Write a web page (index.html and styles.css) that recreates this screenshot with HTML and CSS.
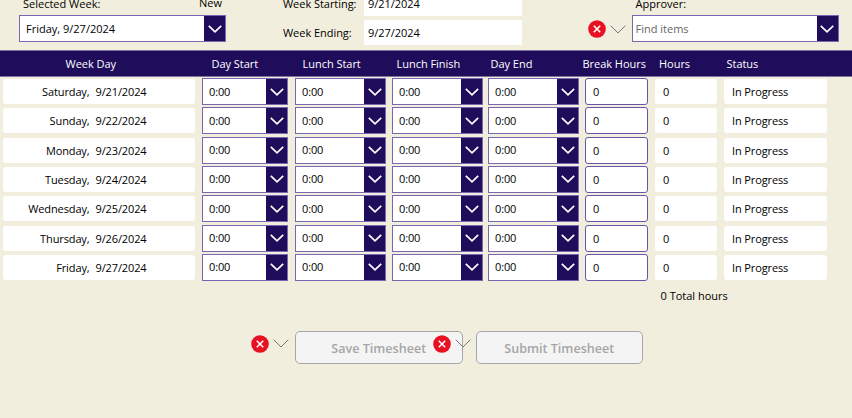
FILE: index.html
```
<!DOCTYPE html>
<html lang="en">
<head>
<meta charset="utf-8">
<title>Timesheet</title>
<link rel="stylesheet" href="styles.css">
</head>
<body>
<svg class="defs" width="0" height="0">
  <symbol id="chev" viewBox="0 0 14 8"><path d="M.8 .9 7 6.8 13.2 .9" fill="none" stroke="currentColor" stroke-width="1.7"/></symbol>
  <symbol id="thin" viewBox="0 0 16 9"><path d="M.7 .7 8 8 15.3 .7" fill="none" stroke="currentColor" stroke-width="1"/></symbol>
  <symbol id="error" viewBox="0 0 18 18"><circle cx="9" cy="9" r="8.8" fill="#e81123"/><path d="M5.8 5.8l6.4 6.4M12.2 5.8l-6.4 6.4" stroke="#fff" stroke-width="1.6"/></symbol>
</svg>
<header class="top">
  <section class="week">
    <div class="caption"><span>Selected Week:</span><span class="new">New</span></div>
    <div class="select"><span>Friday, 9/27/2024</span><i><svg><use href="#chev"/></svg></i></div>
  </section>
  <section class="dates">
    <label>Week Starting:</label><div class="date">9/21/2024</div>
    <label>Week Ending:</label><div class="date">9/27/2024</div>
  </section>
  <div class="alert"><svg class="err"><use href="#error"/></svg><svg class="more"><use href="#thin"/></svg></div>
  <section class="approver">
    <div class="caption"><span>Approver:</span></div>
    <div class="select"><span class="hint">Find items</span><i><svg><use href="#chev"/></svg></i></div>
  </section>
</header>
<div class="thead"><span>Week Day</span><span>Day Start</span><span>Lunch Start</span><span>Lunch Finish</span><span>Day End</span><span>Break Hours</span><span>Hours</span><span>Status</span></div>
<main class="rows" id="rows"></main>
<div class="total">0 Total hours</div>
<footer class="actions">
  <div class="alert"><svg class="err"><use href="#error"/></svg><svg class="more"><use href="#thin"/></svg></div>
  <div class="btn">Save Timesheet
    <div class="alert over"><svg class="err"><use href="#error"/></svg><svg class="more"><use href="#thin"/></svg></div>
  </div>
  <div class="btn">Submit Timesheet</div>
</footer>
<script src="rows.js"></script>
</body>
</html>
```
FILE: styles.css
```
* { box-sizing: border-box; }
body { margin: 0; height: 418px; overflow: hidden; background: #f2eede; color: #000; font: 11px/16px "Open Sans", sans-serif; }
.defs { display: none; }
svg { display: block; }

.top { display: flex; height: 50px; overflow: hidden; }
.week { width: 207px; margin-left: 19px; }
.caption { display: flex; justify-content: space-between; height: 19px; margin-top: -4px; padding: 0 4px; }
.caption .new { margin-top: -1px; }
.select { display: flex; justify-content: space-between; align-items: center; height: 27px; background: #fff; border: 1px solid #7967b2; }
.select > span { padding-left: 6px; }
.select .hint { padding-left: 3px; color: #666; }
.select i { display: flex; align-items: center; justify-content: center; flex: none; width: 21px; height: 100%; background: #1f0c5a; color: #fff; }
.select i svg { width: 14px; height: 8px; }
.dates { display: grid; grid-template-columns: 81px 158px; grid-template-rows: 25px 25px; row-gap: 4px; margin: -9px 0 0 57px; height: 54px; line-height: 25px; letter-spacing: -.04px; }
.dates .date { background: #fff; padding-left: 4px; }
.alert { display: flex; align-items: center; gap: 4px; height: 18px; color: #777; }
.err { width: 18px; height: 18px; }
.more { width: 16px; height: 9px; }
.top .alert { margin: 20px 0 0 66px; }
.approver { width: 207px; margin-left: 5.5px; }

.thead { display: flex; height: 27px; line-height: 26px; background: #1f0c5a; color: #fff; font-weight: 500; border: solid #7d739c; border-width: 1px 0; letter-spacing: -.03px; }
.thead span { flex: none; width: 91px; }
.thead span:nth-child(1) { width: 146px; margin-left: 65.5px; }
.thead span:nth-child(3), .thead span:nth-child(4) { width: 94px; }
.thead span:nth-child(5) { width: 92px; }
.thead span:nth-child(6) { width: 76.5px; }
.thead span:nth-child(7) { width: 67.5px; }

.rows { display: grid; row-gap: 2.33px; padding: 1px 0 0 3px; letter-spacing: -.12px; }
.row { display: grid; grid-template-columns: 199px 93px 97px 96px 97px 70px 69px 103px; height: 27px; }
.row .select { width: 91px; }
.row .select:nth-child(2) { width: 86px; }
.row .select i { width: 21px; }
.cell { width: 62px; height: 25px; margin-top: 1px; background: #fff; border-radius: 3px; line-height: 25px; padding-left: 8px; }
.cell:last-child { width: 103px; }
.cell.day { display: flex; width: 192px; padding: 0; }
.day span { width: 86.5px; margin-right: 6px; text-align: right; }
.cell.break { width: 63px; height: 27px; margin: 0; padding-left: 7px; border: 1px solid #6955a8; border-radius: 3px; }

.total { margin: 7px 0 0 660.5px; }
.actions { display: flex; gap: 13px; margin: 27px 0 0 251px; }
.actions > .alert { margin: 4px -7px 0 0; }
.btn { position: relative; width: 167.5px; height: 33px; border: 1px solid #a6a6a6; border-radius: 5px; background: #f4f4f4; color: #a6a6a6; font-size: 12.6px; font-weight: 600; line-height: 33px; text-align: center; }
.btn .over { position: absolute; left: 136.5px; top: 3px; }
```
FILE: rows.js
```
const days = [["Saturday", 21], ["Sunday", 22], ["Monday", 23], ["Tuesday", 24], ["Wednesday", 25], ["Thursday", 26], ["Friday", 27]];
const select = '<div class="select"><span>0:00</span><i><svg><use href="#chev"/></svg></i></div>';
document.getElementById("rows").innerHTML = days.map(([name, date]) =>
  `<div class="row"><div class="cell day"><span>${name},</span>9/${date}/2024</div>${select.repeat(4)}<div class="cell break">0</div><div class="cell">0</div><div class="cell">In Progress</div></div>`
).join("");
```
